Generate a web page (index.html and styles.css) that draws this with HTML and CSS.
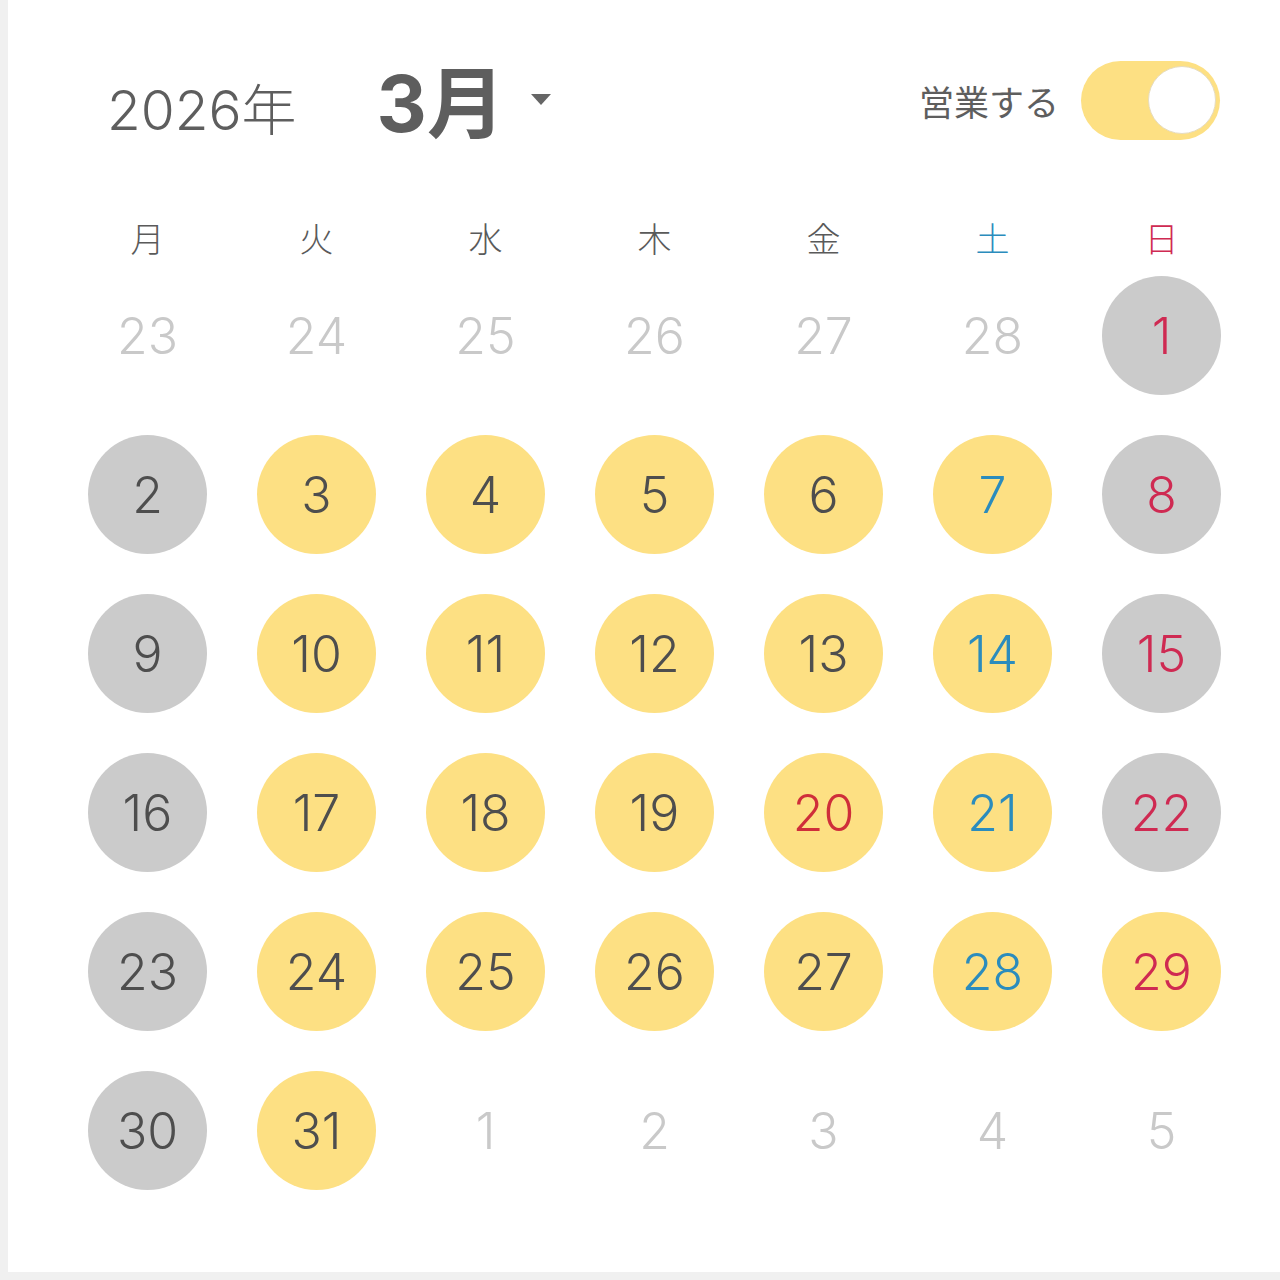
FILE: index.html
```html
<!DOCTYPE html>
<html lang="ja">
<head>
<meta charset="utf-8">
<link rel="stylesheet" href="styles.css">
</head>
<body>
<div class="card">
  <div class="header">
    <div class="year">2026年</div>
    <div class="month">3月</div>
    <svg class="caret" width="20" height="12" viewBox="0 0 20 12"><path d="M0 0 L20 0 L10 11 Z" fill="#666"/></svg>
    <div class="spacer"></div>
    <div class="open-label">営業する</div>
    <div class="toggle"><div class="knob"></div></div>
  </div>
  <div class="weekdays">
    <div>月</div><div>火</div><div>水</div><div>木</div><div>金</div><div class="sat">土</div><div class="sun">日</div>
  </div>
  <div class="days">
    <div class="day muted">23</div><div class="day muted">24</div><div class="day muted">25</div><div class="day muted">26</div><div class="day muted">27</div><div class="day muted">28</div><div class="day off sun">1</div>
    <div class="day off">2</div><div class="day open">3</div><div class="day open">4</div><div class="day open">5</div><div class="day open">6</div><div class="day open sat">7</div><div class="day off sun">8</div>
    <div class="day off">9</div><div class="day open">10</div><div class="day open">11</div><div class="day open">12</div><div class="day open">13</div><div class="day open sat">14</div><div class="day off sun">15</div>
    <div class="day off">16</div><div class="day open">17</div><div class="day open">18</div><div class="day open">19</div><div class="day open holiday">20</div><div class="day open sat">21</div><div class="day off sun">22</div>
    <div class="day off">23</div><div class="day open">24</div><div class="day open">25</div><div class="day open">26</div><div class="day open">27</div><div class="day open sat">28</div><div class="day open sun">29</div>
    <div class="day off">30</div><div class="day open">31</div><div class="day muted">1</div><div class="day muted">2</div><div class="day muted">3</div><div class="day muted">4</div><div class="day muted">5</div>
  </div>
</div>
</body>
</html>
```

FILE: styles.css
```css
html, body {
  margin: 0;
  padding: 0;
  background: #f0f0f0;
}
body {
  font-family: "Noto Sans CJK JP", "Noto Sans", sans-serif;
  color: #555;
}
.card {
  margin-left: 8px;
  height: 1272px;
  background: #fff;
  box-sizing: border-box;
  padding: 0 60px 0 80px;
}
.header {
  height: 200px;
  display: flex;
  align-items: center;
  padding-left: 19px;
}
.year {
  font-family: Inter, "Noto Sans CJK JP", sans-serif;
  font-size: 55px;
  font-weight: 300;
  color: #5e5e5e;
  margin-top: 12px;
}
.month {
  font-family: Inter, "Noto Sans CJK JP", sans-serif;
  font-size: 78px;
  font-weight: 700;
  color: #5e5e5e;
  margin-left: 80px;
  margin-top: -4px;
}
.caret {
  margin-left: 26px;
  margin-top: 0;
}
.spacer {
  flex: 1;
}
.open-label {
  font-size: 35px;
  font-weight: 400;
  color: #5e5e5e;
  margin-right: 22px;
}
.toggle {
  width: 139px;
  height: 79px;
  border-radius: 40px;
  background: #fde083;
  position: relative;
  box-sizing: border-box;
}
.knob {
  position: absolute;
  right: 4px;
  top: 5px;
  width: 68px;
  height: 68px;
  border-radius: 50%;
  background: #fff;
  box-sizing: border-box;
  border: 1px solid #e6dcc0;
}
.weekdays {
  display: grid;
  grid-template-columns: repeat(7, 119px);
  column-gap: 50px;
  height: 76px;
  align-items: center;
  justify-items: center;
  font-size: 34px;
  font-weight: 300;
  color: #5a5a5a;
  padding-bottom: 2px;
  box-sizing: border-box;
}
.days {
  display: grid;
  grid-template-columns: repeat(7, 119px);
  grid-auto-rows: 119px;
  column-gap: 50px;
  row-gap: 40px;
}
.day {
  border-radius: 50%;
  display: flex;
  align-items: center;
  justify-content: center;
  font-family: Inter, "Noto Sans", sans-serif;
  font-size: 50px;
  font-weight: 300;
  color: #4e4e4e;
}
.day.open {
  background: #fde083;
}
.day.off {
  background: #cbcbcb;
}
.day.muted {
  color: #c9c9c9;
  background: transparent;
}
.sat {
  color: #2b8cbd !important;
}
.sun {
  color: #cf2a52 !important;
}
.holiday {
  color: #cf2e3a;
}
.weekdays .sat { color: #2b8cbd; }
.weekdays .sun { color: #cf2a52; }
```
